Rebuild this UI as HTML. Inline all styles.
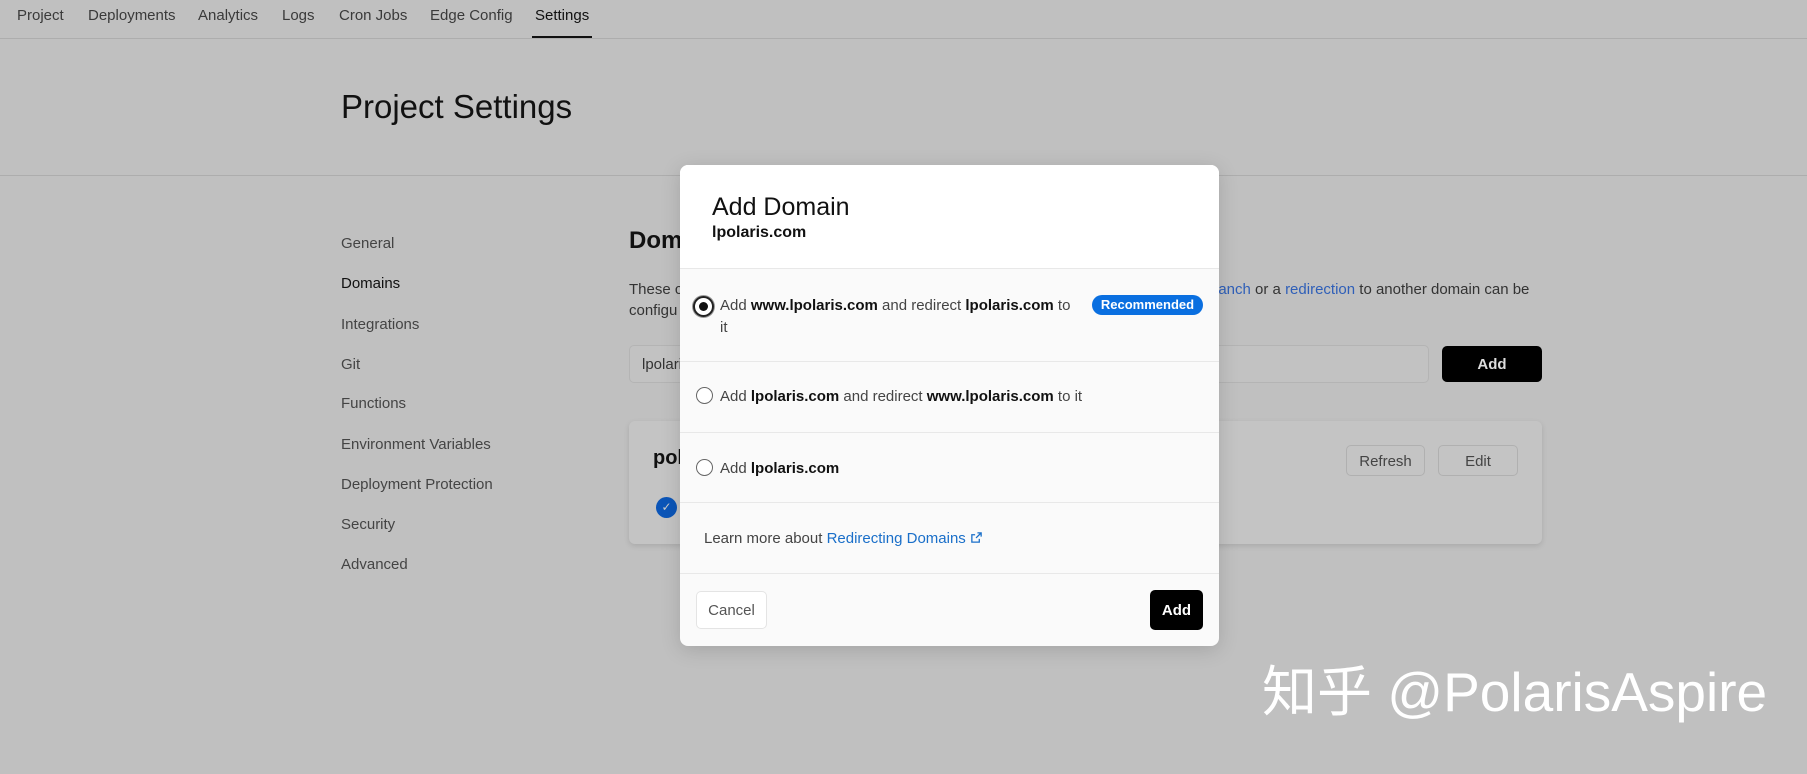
<!DOCTYPE html>
<html><head><meta charset="utf-8">
<style>
*{box-sizing:border-box;margin:0;padding:0}
body{width:1807px;height:774px;overflow:hidden;background:#c0c0c0;font-family:"Liberation Sans",Arial,sans-serif;color:#222;position:relative}
.a{position:absolute;white-space:nowrap}
.tab{position:absolute;top:7px;font-size:15px;color:#3a3a3a}
.side{position:absolute;left:341px;font-size:15px;color:#444}
.m{position:absolute;left:680px;top:165px;width:539px;height:481px;background:#fafafa;border-radius:8px;overflow:hidden;box-shadow:0 4px 20px rgba(0,0,0,.15)}
.m .hd{position:absolute;left:0;top:0;width:100%;height:104px;background:#fff;border-bottom:1px solid #e8e8e8}
.line{position:absolute;left:0;width:100%;height:1px;background:#e8e8e8}
.t{font-size:15px;color:#444}
.t b{color:#111}
.radio{position:absolute;width:17px;height:17px;border-radius:50%;border:1.3px solid #666;background:#fff}
</style></head><body>
<div class="tab" style="left:17px">Project</div>
<div class="tab" style="left:88px">Deployments</div>
<div class="tab" style="left:198px">Analytics</div>
<div class="tab" style="left:282px">Logs</div>
<div class="tab" style="left:339px">Cron Jobs</div>
<div class="tab" style="left:430px">Edge Config</div>
<div class="tab" style="left:535px;color:#111">Settings</div>
<div class="a" style="left:0;top:38px;width:1807px;height:1px;background:#adadad"></div>
<div class="a" style="left:532px;top:36px;width:60px;height:2px;background:#111"></div>
<div class="a" style="left:341px;top:88px;font-size:33px;color:#111">Project Settings</div>
<div class="a" style="left:0;top:175px;width:1807px;height:1px;background:#adadad"></div>
<div class="side" style="top:235px">General</div>
<div class="side" style="top:275px;color:#111">Domains</div>
<div class="side" style="top:316px">Integrations</div>
<div class="side" style="top:356px">Git</div>
<div class="side" style="top:395px">Functions</div>
<div class="side" style="top:436px">Environment Variables</div>
<div class="side" style="top:476px">Deployment Protection</div>
<div class="side" style="top:516px">Security</div>
<div class="side" style="top:556px">Advanced</div>
<div class="a" style="left:629px;top:227px;font-size:24px;font-weight:bold;color:#111">Domains</div>
<div class="a" style="left:629px;top:281px;font-size:15px;color:#333">These c</div>
<div class="a" style="left:629px;top:302px;font-size:15px;color:#333">configu</div>
<div class="a" style="left:1205px;top:281px;font-size:15px;color:#333"><span style="color:#2f5fb8">branch</span> or a <span style="color:#2f5fb8">redirection</span> to another domain can be</div>
<div class="a" style="left:629px;top:345px;width:800px;height:38px;border:1px solid #b4b4b4;border-radius:5px;background:#c2c2c2;padding:10px 12px;font-size:15px;color:#333">lpolaris.com</div>
<div class="a" style="left:1442px;top:346px;width:100px;height:36px;background:#000;border-radius:5px;color:#ddd;font-size:15px;font-weight:bold;text-align:center;line-height:38px">Add</div>
<div class="a" style="left:629px;top:421px;width:913px;height:123px;background:#c4c4c4;border-radius:6px;box-shadow:0 2px 6px rgba(0,0,0,.12)"></div>
<div class="a" style="left:653px;top:447px;font-size:20px;font-weight:bold;color:#111">polaris.com</div>
<div class="a" style="left:656px;top:497px;width:21px;height:21px;border-radius:50%;background:#0b55b8;color:#ccc;font-size:12px;text-align:center;line-height:21px">✓</div>
<div class="a" style="left:1346px;top:445px;width:79px;height:31px;border:1px solid #b0b0b0;border-radius:5px;font-size:15px;color:#444;text-align:center;line-height:31px">Refresh</div>
<div class="a" style="left:1438px;top:445px;width:80px;height:31px;border:1px solid #b0b0b0;border-radius:5px;font-size:15px;color:#444;text-align:center;line-height:31px">Edit</div>

<div class="m">
 <div class="hd"></div>
 <div class="a" style="left:32px;top:28px;font-size:25px;color:#111">Add Domain</div>
 <div class="a" style="left:32px;top:59px;font-size:16px;font-weight:bold;color:#111">lpolaris.com</div>
 <div class="radio" style="left:13px;top:131px;width:21px;height:21px;border:2px solid #222;box-shadow:0 0 0 1px #999"></div>
 <div class="a" style="left:19px;top:137px;width:9px;height:9px;border-radius:50%;background:#111"></div>
 <div class="a t" style="left:40px;top:132px">Add <b>www.lpolaris.com</b> and redirect <b>lpolaris.com</b> to</div>
 <div class="a t" style="left:40px;top:154px">it</div>
 <div class="a" style="left:412px;top:130px;width:111px;height:20px;border-radius:10px;background:#0a6fe0;color:#fff;font-size:13px;font-weight:bold;text-align:center;line-height:20px">Recommended</div>
 <div class="line" style="top:196px"></div>
 <div class="radio" style="left:16px;top:222px"></div>
 <div class="a t" style="left:40px;top:223px">Add <b>lpolaris.com</b> and redirect <b>www.lpolaris.com</b> to it</div>
 <div class="line" style="top:267px"></div>
 <div class="radio" style="left:16px;top:294px"></div>
 <div class="a t" style="left:40px;top:295px">Add <b>lpolaris.com</b></div>
 <div class="line" style="top:337px"></div>
 <div class="a t" style="left:24px;top:365px">Learn more about <span style="color:#1a6fc9">Redirecting Domains</span> <svg width="13" height="13" viewBox="0 0 14 14" style="vertical-align:-1px"><path d="M8 2h4v4M12 2L6.5 7.5M10 8.5V12H2V4h3.5" fill="none" stroke="#1a6fc9" stroke-width="1.4"/></svg></div>
 <div class="line" style="top:408px"></div>
 <div class="a" style="left:16px;top:426px;width:71px;height:38px;border:1px solid #e4e4e4;border-radius:5px;background:#fff;font-size:15px;color:#555;text-align:center;line-height:38px">Cancel</div>
 <div class="a" style="left:470px;top:425px;width:53px;height:40px;border-radius:5px;background:#000;font-size:15px;font-weight:bold;color:#fff;text-align:center;line-height:42px">Add</div>
</div>
<div class="a" style="left:1262px;top:657px;font-size:55px;color:#fff;font-family:'Liberation Sans','Noto Sans CJK SC',sans-serif;line-height:70px">知乎 @PolarisAspire</div>
</body></html>
